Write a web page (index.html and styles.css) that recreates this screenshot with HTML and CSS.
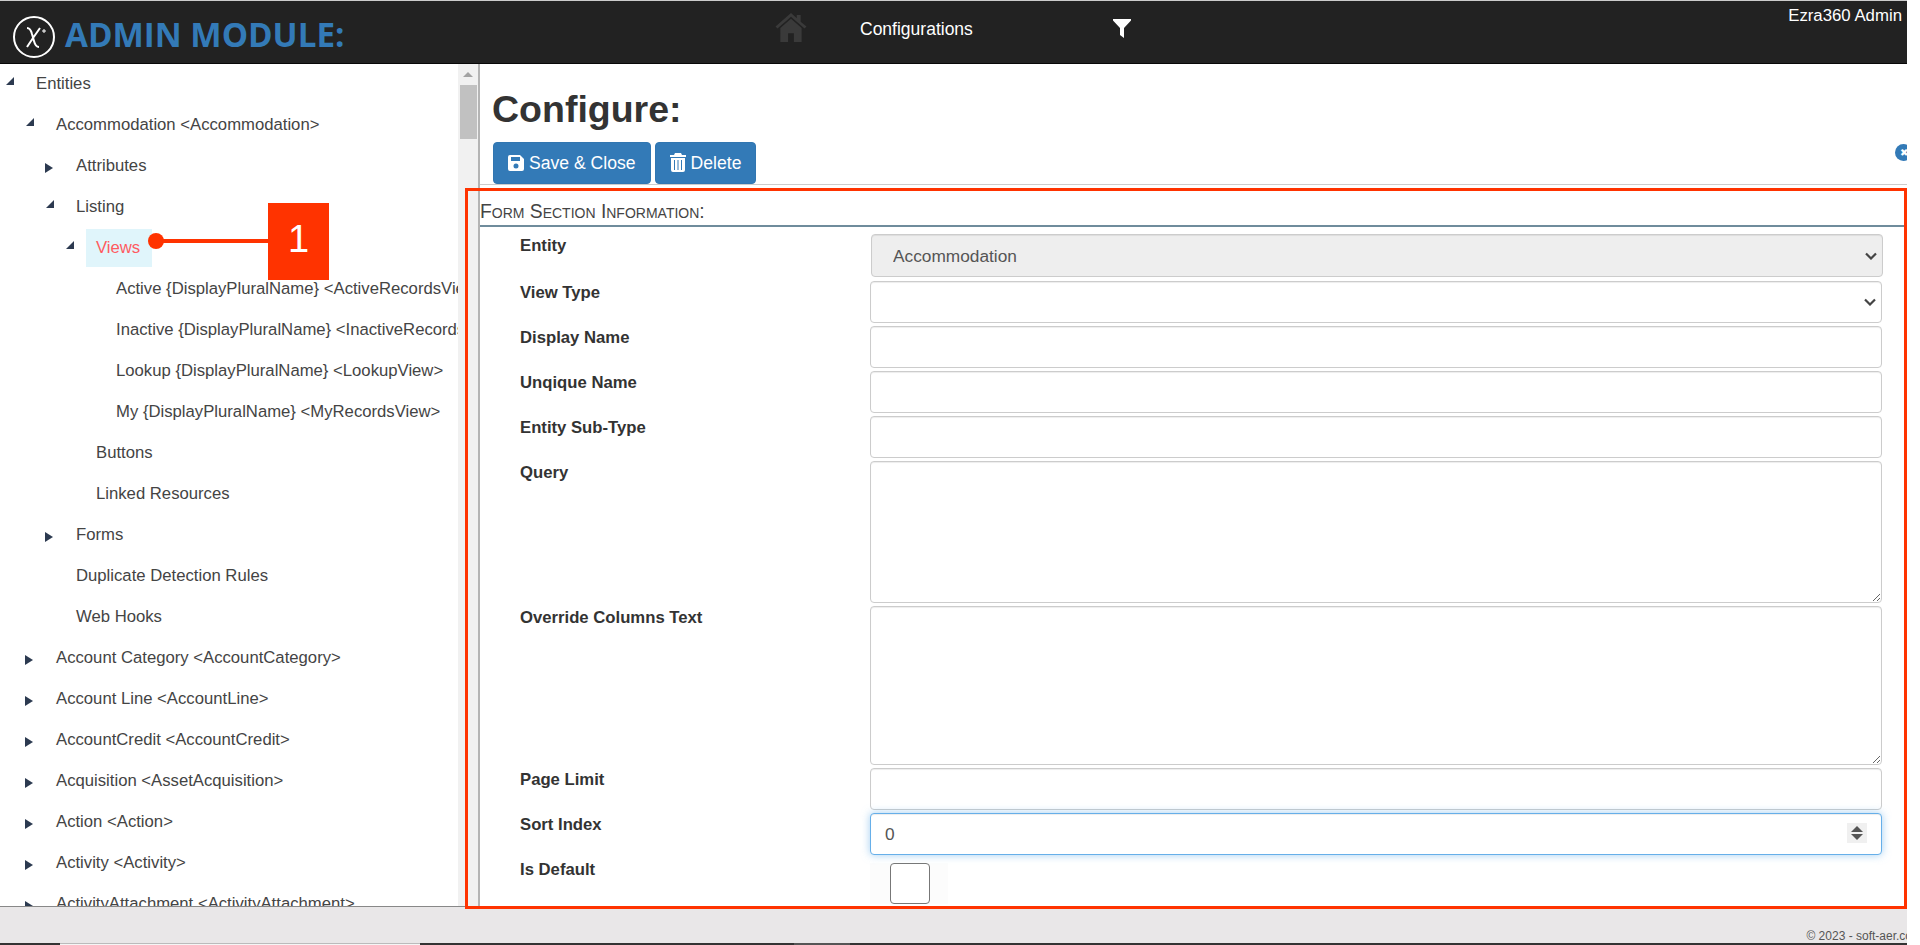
FILE: index.html
```html
<!DOCTYPE html>
<html lang="en">
<head>
  <meta charset="UTF-8" />
  <title>Admin Module - Configure</title>
  <link rel="stylesheet" href="styles.css">
</head>
<body>

<div class="screen">

  <header class="topbar">
    <div class="brand">
      <svg class="logo" viewBox="0 0 44 44" aria-hidden="true">
        <circle cx="22" cy="22" r="20" fill="none" stroke="#fff" stroke-width="2"/>
        <path d="M15 13c3 0 4 2 5 6l2 7c1 4 2 6 5 6M28 13l-7 10-6 9" fill="none" stroke="#fff" stroke-width="2"/>
        <path d="M30 16h4M32 14v4" stroke="#fff" stroke-width="1"/>
      </svg>
      <span class="brand-name">ADMIN MODULE:</span>
    </div>
    <svg class="home-icon" viewBox="0 0 32 30" aria-hidden="true">
      <path d="M16 0 0 14l2 2 14-12 14 12 2-2-6-5V2h-4v3.500z"/>
      <path d="M16 6 5 15.500V30h8v-9h6v9h8V15.500z"/>
    </svg>
    <a class="nav-link">Configurations</a>
    <svg class="filter-icon" viewBox="0 0 18 19" aria-hidden="true">
      <path d="M0 0h18v1.500L11 9v10l-4-3V9L0 1.500z"/>
    </svg>
    <span class="user-name">Ezra360 Admin</span>
  </header>

  <div class="main">
    <aside class="sidebar">
      <ul class="tree">
        <li class="node open lvl0">Entities</li>
        <li class="node open lvl1">Accommodation &lt;Accommodation&gt;</li>
        <li class="node closed lvl2">Attributes</li>
        <li class="node open lvl2">Listing</li>
        <li class="node open lvl3"><span class="selected">Views</span></li>
        <li class="node lvl4">Active {DisplayPluralName} &lt;ActiveRecordsView&gt;</li>
        <li class="node lvl4">Inactive {DisplayPluralName} &lt;InactiveRecordsView&gt;</li>
        <li class="node lvl4">Lookup {DisplayPluralName} &lt;LookupView&gt;</li>
        <li class="node lvl4">My {DisplayPluralName} &lt;MyRecordsView&gt;</li>
        <li class="node lvl3">Buttons</li>
        <li class="node lvl3">Linked Resources</li>
        <li class="node closed lvl2">Forms</li>
        <li class="node lvl2">Duplicate Detection Rules</li>
        <li class="node lvl2">Web Hooks</li>
        <li class="node closed lvl1">Account Category &lt;AccountCategory&gt;</li>
        <li class="node closed lvl1">Account Line &lt;AccountLine&gt;</li>
        <li class="node closed lvl1">AccountCredit &lt;AccountCredit&gt;</li>
        <li class="node closed lvl1">Acquisition &lt;AssetAcquisition&gt;</li>
        <li class="node closed lvl1">Action &lt;Action&gt;</li>
        <li class="node closed lvl1">Activity &lt;Activity&gt;</li>
        <li class="node closed lvl1">ActivityAttachment &lt;ActivityAttachment&gt;</li>
      </ul>
      <div class="scrollbar">
        <span class="scroll-up"></span>
        <span class="scroll-thumb"></span>
      </div>
    </aside>

    <section class="content">
      <h1>Configure:</h1>
      <div class="toolbar">
        <button class="btn">
          <svg class="btn-icon" viewBox="0 0 16 16" aria-hidden="true">
            <path fill-rule="evenodd" d="M2 0h10l4 4v10a2 2 0 0 1-2 2H2a2 2 0 0 1-2-2V2a2 2 0 0 1 2-2zm1 2v4h9V2zm5 6.500a2.500 2.500 0 1 0 0 5 2.500 2.500 0 0 0 0-5z"/>
          </svg>Save &amp; Close</button>
        <button class="btn">
          <svg class="btn-icon trash" viewBox="0 0 16 19" aria-hidden="true">
            <path fill-rule="evenodd" d="M5 0h6l1 2h4v2H0V2h4zM1 5h14v12a2 2 0 0 1-2 2H3a2 2 0 0 1-2-2zm3 2v10h1V7zm3.500 0v10h1V7zM11 7v10h1V7z"/>
          </svg>Delete</button>
        <span class="close-icon">&#10006;</span>
      </div>

      <form class="section">
        <div class="section-title">Form Section Information:</div>

        <div class="row">
          <label>Entity</label>
          <select class="field drop locked" disabled><option>Accommodation</option></select>
        </div>
        <div class="row">
          <label>View Type</label>
          <select class="field drop"><option></option></select>
        </div>
        <div class="row">
          <label>Display Name</label>
          <input class="field" type="text">
        </div>
        <div class="row">
          <label>Unqique Name</label>
          <input class="field" type="text">
        </div>
        <div class="row">
          <label>Entity Sub-Type</label>
          <input class="field" type="text">
        </div>
        <div class="row">
          <label>Query</label>
          <textarea class="field query"></textarea>
        </div>
        <div class="row">
          <label>Override Columns Text</label>
          <textarea class="field override"></textarea>
        </div>
        <div class="row">
          <label>Page Limit</label>
          <input class="field" type="text">
        </div>
        <div class="row">
          <label>Sort Index</label>
          <div class="spin-wrap">
            <input class="field focused" type="text" value="0">
            <span class="spinner"></span>
          </div>
        </div>
        <div class="row">
          <label>Is Default</label>
          <div class="check-wrap"><span class="check-box"></span></div>
        </div>
      </form>
    </section>
  </div>

  <footer class="footer"><span>© 2023 - soft-aer.com</span></footer>

  <!-- annotation drawn over the tree -->
  <div class="callout">
    <span class="callout-dot"></span>
    <span class="callout-line"></span>
    <span class="callout-num">1</span>
  </div>
  <div class="red-frame"></div>
</div>

<div class="taskbar"><span class="task-light"></span><span class="task-mid"></span></div>

</body>
</html>
```

FILE: styles.css
```css
* {
  box-sizing: border-box;
}

html, body {
  margin: 0;
  height: 945px;
  overflow: hidden;
  background: #fff;
}

body {
  font-family: "Liberation Sans", Arial, sans-serif;
  font-size: 16.7px;
  color: #333;
}

.screen {
  position: relative;
  width: 1907px;
  height: 943px;
  display: flex;
  flex-direction: column;
  overflow: hidden;
}

/* top bar */
.topbar {
  position: relative;
  flex: none;
  height: 64px;
  background: #222;
  border-top: 1px solid #ccc;
  border-bottom: 1px solid #080808;
  display: flex;
  align-items: flex-start;
}

.brand {
  width: 775px;
  padding: 14px 0 0 12px;
  display: flex;
  align-items: center;
}

.logo {
  width: 44px;
  height: 44px;
  flex: none;
}

.brand-name {
  margin: 0 0 4px 9px;
  font-family: "Open Sans", sans-serif;
  font-weight: 700;
  font-size: 33.2px;
  line-height: 38px;
  color: #337ab7;
  white-space: nowrap;
}

.home-icon {
  width: 32px;
  height: 29px;
  margin-top: 12px;
  fill: #3a3a3a;
  flex: none;
}

.nav-link {
  margin: 18px 0 0 53px;
  width: 253px;
  font-size: 17.5px;
  line-height: 20px;
  color: #fff;
}

.filter-icon {
  width: 18px;
  height: 19px;
  margin-top: 18px;
  fill: #fff;
  flex: none;
}

.user-name {
  position: absolute;
  right: 5px;
  top: 6px;
  font-size: 16.8px;
  line-height: 18px;
  color: #fff;
}

/* left tree */
.main {
  flex: 1;
  display: flex;
  min-height: 0;
}

.sidebar {
  flex: none;
  width: 480px;
  height: 843px;
  display: flex;
  border-right: 2px solid #b4b4b4;
  border-bottom: 1px solid #888;
  overflow: hidden;
}

.tree {
  flex: 1;
  min-width: 0;
  list-style: none;
  margin: -1px 0 0;
  padding: 0;
  overflow: hidden;
}

.node {
  position: relative;
  height: 41px;
  line-height: 41px;
  white-space: nowrap;
  color: #444;
}

.lvl0 { padding-left: 36px; }
.lvl1 { padding-left: 56px; }
.lvl2 { padding-left: 76px; }
.lvl3 { padding-left: 96px; }
.lvl4 { padding-left: 116px; }

.open::before,
.closed::before {
  content: "";
  position: absolute;
}

.open::before {
  top: 14px;
  border-left: 8px solid transparent;
  border-bottom: 8px solid #2c3a50;
}

.closed::before {
  top: 18px;
  border-top: 5px solid transparent;
  border-bottom: 5px solid transparent;
  border-left: 8px solid #2c3a50;
}

.open.lvl0::before { left: 6px; }
.open.lvl1::before { left: 26px; }
.open.lvl2::before { left: 46px; }
.open.lvl3::before { left: 66px; }
.closed.lvl1::before { left: 25px; }
.closed.lvl2::before { left: 45px; }

.selected {
  display: inline-block;
  margin-left: -10px;
  padding: 0 12px 0 10px;
  height: 38px;
  line-height: 38px;
  background: #e0f5fb;
  color: #ff5a5f;
}

.scrollbar {
  flex: none;
  width: 20px;
  background: #f1f1f1;
  padding-top: 8px;
}

.scroll-up {
  display: block;
  width: 0;
  margin: 0 auto 8px;
  border-left: 5px solid transparent;
  border-right: 5px solid transparent;
  border-bottom: 5px solid #a3a3a3;
}

.scroll-thumb {
  display: block;
  width: 17px;
  height: 54px;
  margin: 0 auto;
  background: #c1c1c1;
}

/* right side */
.content {
  flex: 1;
  min-width: 0;
}

h1 {
  margin: 23px 0 0 12px;
  font-size: 37.5px;
  line-height: 44px;
  font-weight: 700;
  color: #333;
}

.toolbar {
  position: relative;
  height: 55px;
  margin-top: 11px;
  padding-left: 13px;
  display: flex;
  gap: 4px;
  align-items: flex-start;
}

.toolbar::after {
  content: "";
  position: absolute;
  left: 0;
  right: 0;
  top: 42px;
  border-top: 1px solid #ccc;
}

.btn {
  height: 42px;
  padding: 0 14px;
  border: 1px solid #3176b1;
  border-radius: 4px;
  background: #337ab7;
  color: #fff;
  font-family: inherit;
  font-size: 17.6px;
  white-space: nowrap;
}

.btn-icon {
  height: 16px;
  width: 16px;
  margin-right: 5px;
  fill: #fff;
  vertical-align: -2px;
}

.trash {
  height: 19px;
  vertical-align: -3px;
}

.close-icon {
  position: absolute;
  right: -5px;
  top: 2px;
  width: 17px;
  height: 17px;
  border-radius: 50%;
  background: #337ab7;
  color: #fff;
  font-size: 10px;
  line-height: 17px;
  text-align: center;
}

.section {
  margin-top: -14px;
}

.section-title {
  height: 44px;
  padding-top: 19px;
  font-size: 19.3px;
  line-height: 20px;
  font-variant: small-caps;
  color: #444;
  border-bottom: 2px solid #6f8c9c;
  margin-bottom: 7px;
}

.row {
  display: flex;
  padding-left: 40px;
  margin-bottom: 3px;
}

.row label {
  flex: none;
  width: 350px;
  padding-top: 1px;
  font-weight: 700;
  line-height: 22px;
}

.field {
  display: block;
  width: 1012px;
  height: 42px;
  padding: 6px 14px;
  border: 1px solid #ccc;
  border-radius: 4px;
  background-color: #fff;
  color: #555;
  font-family: inherit;
  font-size: 17.3px;
  box-shadow: inset 0 1px 1px rgba(0, 0, 0, .075);
}

.drop {
  appearance: none;
  padding-left: 21px;
  background-image: url("data:image/svg+xml,%3Csvg xmlns='http://www.w3.org/2000/svg' viewBox='0 0 12 8'%3E%3Cpath d='M1 1.500l5 5 5-5' fill='none' stroke='%23444' stroke-width='2.200'/%3E%3C/svg%3E");
  background-repeat: no-repeat;
  background-position: right 5px center;
  background-size: 12px 8px;
}

.locked {
  height: 43px;
  margin: 0 0 1px 1px;
  background-color: #eee;
  opacity: 1;
}

.query {
  height: 142px;
}

.override {
  height: 159px;
}

.focused {
  border-color: #66afe9;
  box-shadow: inset 0 1px 1px rgba(0, 0, 0, .075), 0 0 8px rgba(102, 175, 233, .6);
}

.spin-wrap {
  position: relative;
}

.spinner {
  position: absolute;
  right: 15px;
  top: 10px;
  width: 20px;
  height: 20px;
  background: #f0f0f0;
}

.spinner::before,
.spinner::after {
  content: "";
  position: absolute;
  left: 4px;
  border-left: 6px solid transparent;
  border-right: 6px solid transparent;
}

.spinner::before {
  top: 3px;
  border-bottom: 6px solid #555;
}

.spinner::after {
  top: 11px;
  border-top: 6px solid #555;
}

.check-wrap {
  width: 78px;
  height: 41px;
  margin-top: 5px;
  padding-left: 20px;
  background: #fcfcfc;
}

.check-box {
  display: block;
  width: 40px;
  height: 41px;
  border: 1px solid #777;
  border-radius: 4px;
  background: #fff;
}

/* footer */
.footer {
  flex: none;
  height: 36px;
  background: #e9e7e8;
  display: flex;
  align-items: flex-end;
  justify-content: flex-end;
  font-size: 12px;
  line-height: 16px;
  color: #555;
  overflow: hidden;
}

.footer span {
  margin: 0 -15px -1px 0;
  white-space: nowrap;
}

/* annotation over the screenshot */
.callout {
  position: absolute;
  left: 148px;
  top: 203px;
  width: 181px;
  height: 77px;
}

.callout-dot {
  position: absolute;
  left: 0;
  top: 30px;
  width: 16px;
  height: 16px;
  border-radius: 50%;
  background: #ff3300;
}

.callout-line {
  position: absolute;
  left: 12px;
  top: 36px;
  width: 110px;
  height: 4px;
  background: #ff3300;
}

.callout-num {
  position: absolute;
  left: 120px;
  top: 0;
  width: 61px;
  height: 77px;
  background: #ff3300;
  color: #fff;
  font-size: 38px;
  line-height: 72px;
  text-align: center;
}

.red-frame {
  position: absolute;
  left: 465px;
  top: 188px;
  width: 1442px;
  height: 721px;
  border: 3px solid #ff3300;
}

.taskbar {
  position: relative;
  width: 1907px;
  height: 2px;
  background: #333;
}

.task-light {
  position: absolute;
  left: 60px;
  width: 360px;
  height: 2px;
  background: #f5f5f5;
  border-top: 1px solid #bbb;
}

.task-mid {
  position: absolute;
  left: 794px;
  width: 56px;
  height: 2px;
  background: #555;
}
```
